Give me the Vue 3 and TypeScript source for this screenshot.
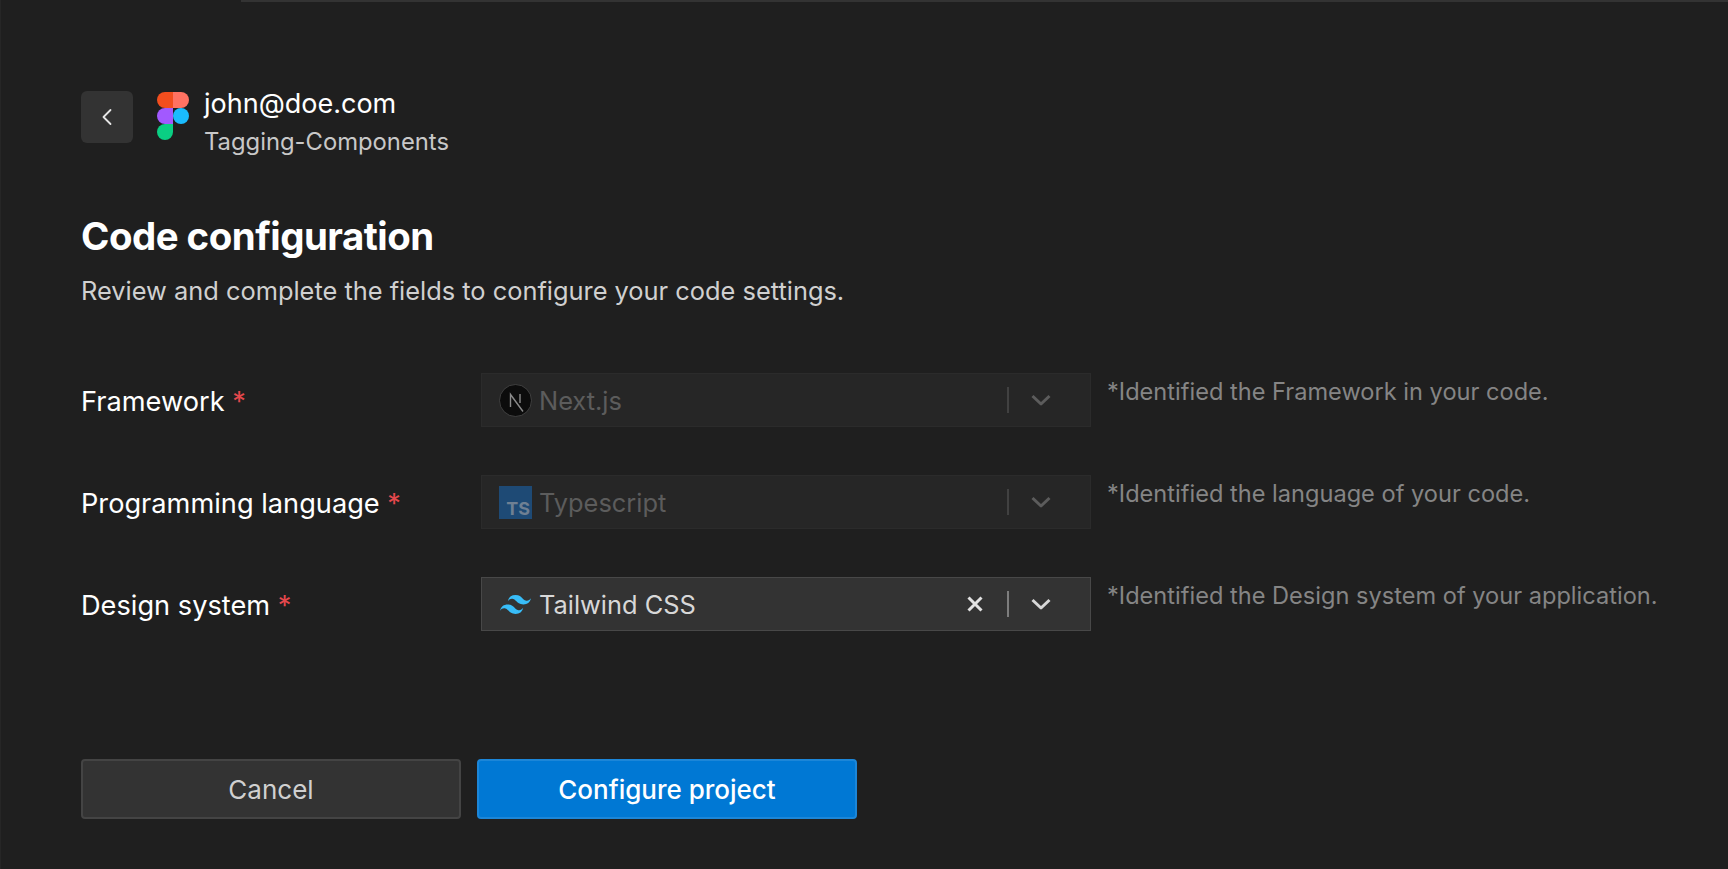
<script setup lang="ts">
interface Field {
  label: string
  value: string
  icon: 'next' | 'ts' | 'tailwind'
  hint: string
  disabled: boolean
}

const fields: Field[] = [
  { label: 'Framework', value: 'Next.js', icon: 'next', hint: '*Identified the Framework in your code.', disabled: true },
  { label: 'Programming language', value: 'Typescript', icon: 'ts', hint: '*Identified the language of your code.', disabled: true },
  { label: 'Design system', value: 'Tailwind CSS', icon: 'tailwind', hint: '*Identified the Design system of your application.', disabled: false }
]
</script>

<template>
  <div class="page">
    <div class="top-line"></div>

    <header class="account">
      <button class="back-btn" aria-label="Back">
        <svg width="14" height="20" viewBox="0 0 14 20" fill="none">
          <path d="M10.5 3 L3.5 10 L10.5 17" stroke="#e6e6e6" stroke-width="1.8" stroke-linecap="round" stroke-linejoin="round" />
        </svg>
      </button>
      <svg class="figma" width="32" height="48" viewBox="0 0 32 48">
        <path d="M8 0 H16 V16 H8 A8 8 0 0 1 8 0 Z" fill="#f24e1e" />
        <path d="M16 0 H24 A8 8 0 0 1 24 16 H16 Z" fill="#ff7262" />
        <path d="M8 16 H16 V32 H8 A8 8 0 0 1 8 16 Z" fill="#a259ff" />
        <circle cx="24" cy="24" r="8" fill="#1abcfe" />
        <path d="M8 32 H16 V40 A8 8 0 1 1 8 32 Z" fill="#0acf83" />
      </svg>
      <div class="account-text">
        <div class="account-mail">john@doe.com</div>
        <div class="account-file">Tagging-Components</div>
      </div>
    </header>

    <h1 class="title">Code configuration</h1>
    <p class="subtitle">Review and complete the fields to configure your code settings.</p>

    <div class="fields">
      <div v-for="field in fields" :key="field.label" class="field-row">
        <label class="field-label">{{ field.label }} <span class="required">*</span></label>
        <div class="select" :class="{ disabled: field.disabled }">
          <span class="select-icon">
            <svg v-if="field.icon === 'next'" width="33" height="33" viewBox="0 0 33 33">
              <circle cx="16.5" cy="16.5" r="16" fill="#0c0c0c" stroke="#4a4a4a" stroke-width="0.8" />
              <path d="M11.5 23 V10.5 L24 27.5" fill="none" stroke="#8a8a8a" stroke-width="1.4" />
              <path d="M21 10 V19" fill="none" stroke="#8a8a8a" stroke-width="1.4" />
            </svg>
            <span v-else-if="field.icon === 'ts'" class="ts-badge">TS</span>
            <svg v-else width="31" height="19" viewBox="0 0 33 20">
              <path d="M16.5 0 C12.1 0 9.4 2.2 8.3 6.6 C9.9 4.4 11.8 3.6 14 4.2 C15.3 4.5 16.2 5.4 17.2 6.4 C18.8 8.1 20.7 10 24.8 10 C29.2 10 31.9 7.8 33 3.4 C31.4 5.6 29.5 6.4 27.3 5.8 C26 5.5 25.1 4.6 24.1 3.6 C22.5 1.9 20.6 0 16.5 0 Z M8.3 10 C3.9 10 1.1 12.2 0 16.6 C1.6 14.4 3.5 13.6 5.7 14.2 C7 14.5 7.9 15.4 8.9 16.4 C10.5 18.1 12.4 20 16.5 20 C20.9 20 23.6 17.8 24.7 13.4 C23.1 15.6 21.2 16.4 19 15.8 C17.7 15.5 16.8 14.6 15.8 13.6 C14.2 11.9 12.3 10 8.3 10 Z" fill="#38bdf8" />
            </svg>
          </span>
          <span class="select-value">{{ field.value }}</span>
          <svg v-if="!field.disabled" class="clear" width="16" height="16" viewBox="0 0 16 16">
            <path d="M1.5 1.5 L14.5 14.5 M14.5 1.5 L1.5 14.5" stroke="#e2e2e2" stroke-width="3" fill="none" />
          </svg>
          <span class="divider"></span>
          <svg class="chevron" width="20" height="12" viewBox="0 0 20 12">
            <path d="M1.5 2 L10 10 L18.5 2" fill="none" stroke="currentColor" stroke-width="3" stroke-linejoin="round" />
          </svg>
        </div>
        <div class="field-hint">{{ field.hint }}</div>
      </div>
    </div>

    <div class="actions">
      <button class="btn btn-cancel">Cancel</button>
      <button class="btn btn-primary">Configure project</button>
    </div>
  </div>
</template>

<style>
html,
body {
  margin: 0;
  background: #1f1f1f;
}
</style>

<style scoped>
.page {
  position: relative;
  box-sizing: border-box;
  width: 1728px;
  height: 869px;
  overflow: hidden;
  padding: 91px 0 0 80px;
  background: #1f1f1f;
  border-left: 1px solid #262626;
  font-family: Inter, "Liberation Sans", sans-serif;
  color: #fff;
}

.top-line {
  position: absolute;
  top: 0;
  left: 240px;
  right: 0;
  height: 2px;
  background: #333;
}

.account {
  display: flex;
  align-items: flex-start;
  height: 52px;
}

.back-btn {
  display: flex;
  align-items: center;
  justify-content: center;
  width: 52px;
  height: 52px;
  padding: 0;
  border: none;
  border-radius: 6px;
  background: #333;
}

.figma {
  margin: 1px 0 0 24px;
  flex-shrink: 0;
}

.account-text {
  margin: -4px 0 0 15px;
}

.account-mail {
  font-size: 27px;
  line-height: 34px;
  color: #fff;
}

.account-file {
  margin-top: 6px;
  font-size: 23.8px;
  line-height: 30px;
  color: #c8c8c8;
}

.title {
  margin: 69px 0 0;
  font-size: 38.4px;
  line-height: 48px;
  font-weight: 700;
  letter-spacing: -0.5px;
  color: #fff;
}

.subtitle {
  margin: 15px 0 0;
  font-size: 25.4px;
  line-height: 32px;
  color: #d0d0d0;
}

.fields {
  display: flex;
  flex-direction: column;
  gap: 48px;
  margin-top: 66px;
}

.field-row {
  display: flex;
  align-items: flex-start;
  height: 54px;
}

.field-label {
  width: 400px;
  flex-shrink: 0;
  font-size: 27.2px;
  line-height: 58px;
  color: #fff;
}

.required {
  color: #e5484d;
}

.select {
  display: flex;
  align-items: center;
  box-sizing: border-box;
  width: 610px;
  height: 54px;
  padding: 0 39px 0 17px;
  flex-shrink: 0;
  background: #333;
  border: 1px solid #484848;
  color: #d8d8d8;
}

.select.disabled {
  background: #262626;
  border-color: #2b2b2b;
  color: #5c5c5c;
}

.select-icon {
  display: flex;
  align-items: center;
  justify-content: center;
  width: 33px;
  height: 33px;
  flex-shrink: 0;
}

.ts-badge {
  display: flex;
  align-items: flex-end;
  justify-content: flex-end;
  box-sizing: border-box;
  width: 33px;
  height: 33px;
  padding: 0 2px 0 0;
  background: #1e4a75;
  color: #6f8093;
  font-size: 18px;
  line-height: 20px;
  font-weight: 700;
}

.select-value {
  flex: 1;
  margin: 2px 0 0 7px;
  font-size: 25.4px;
  line-height: 34px;
}

.clear {
  margin-right: 24px;
}

.divider {
  width: 2px;
  height: 26px;
  background: currentColor;
  opacity: 0.45;
}

.select.disabled .divider {
  opacity: 0.5;
}

.chevron {
  margin-left: 22px;
}

.field-hint {
  margin: 3px 0 0 16px;
  font-size: 23.6px;
  line-height: 32px;
  white-space: nowrap;
  color: #858585;
}

.actions {
  display: flex;
  gap: 16px;
  margin-top: 128px;
}

.btn {
  box-sizing: border-box;
  width: 380px;
  height: 60px;
  border-radius: 4px;
  font-family: inherit;
  font-size: 26px;
}

.btn-cancel {
  background: #333;
  border: 2px solid #444;
  color: #d0d0d0;
}

.btn-primary {
  background: #0078d4;
  border: 2px solid #1c86d8;
  color: #fff;
  font-weight: 500;
}
</style>
